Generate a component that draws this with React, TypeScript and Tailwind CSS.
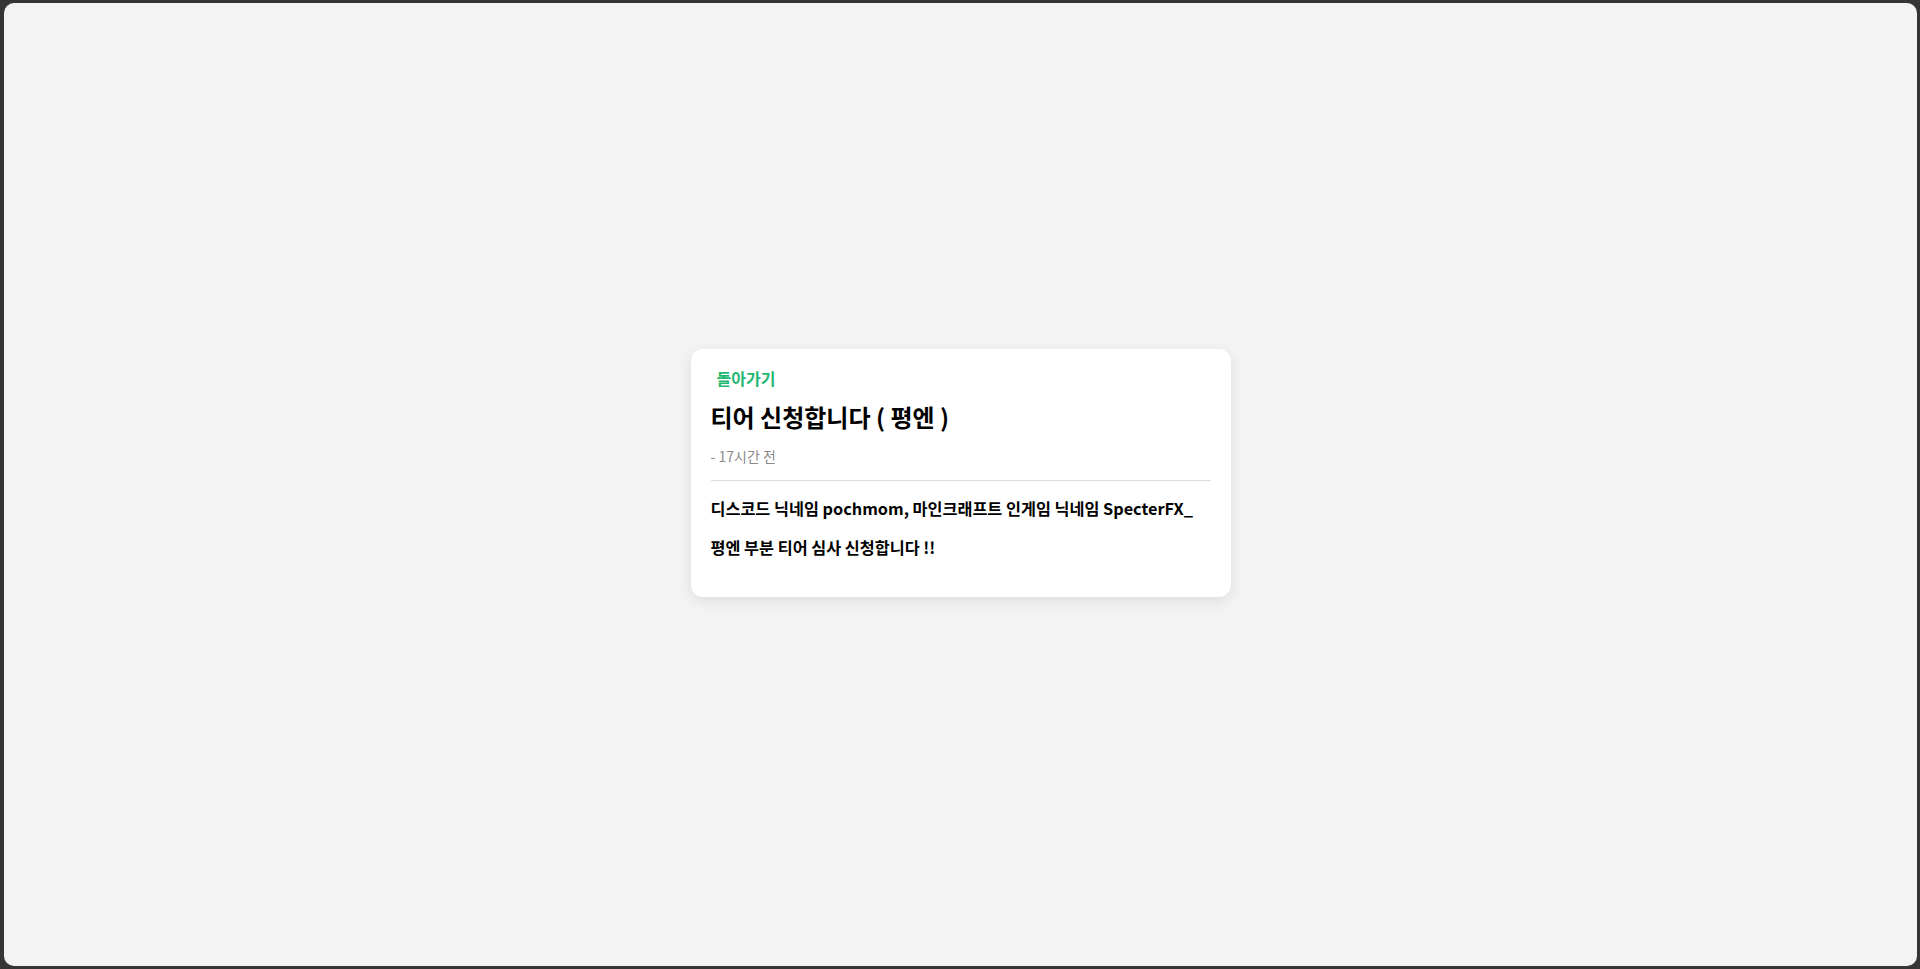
import React from 'react'

const font = { fontFamily: '"Noto Sans CJK KR", "Noto Sans", sans-serif' }

export default function App() {
    return (
        <div className="h-screen w-full bg-[#353535] pt-[3px] pb-[3px] pl-[4px] pr-[3px]" style={font}>
            <div className="h-full w-full rounded-[10px] bg-[#f3f3f3] flex items-center justify-center pb-[24px]">
                <div className="w-[540px] rounded-xl bg-white px-5 pt-[19px] pb-5 shadow-[0_4px_14px_rgba(0,0,0,0.09)]">
                    <button className="block pl-[6px] text-[16px] leading-5 font-semibold text-[#1fb870]">돌아가기</button>
                    <h1 className="mt-[13px] text-[24px] leading-8 font-bold text-black">티어 신청합니다 ( 평엔 )</h1>
                    <div className="mt-[13px] pb-[14px] text-[14px] leading-5 text-[#8a8a8a] border-b border-[#dedede]">- 17시간 전</div>
                    <div className="text-[16.25px] leading-6 font-bold text-black">
                        <p className="mt-[15px] mb-[15px]">디스코드 닉네임 pochmom, 마인크래프트 인게임 닉네임 SpecterFX_</p>
                        <p className="mb-[18px]">평엔 부분 티어 심사 신청합니다 !!</p>
                    </div>
                </div>
            </div>
        </div>
    )
}
